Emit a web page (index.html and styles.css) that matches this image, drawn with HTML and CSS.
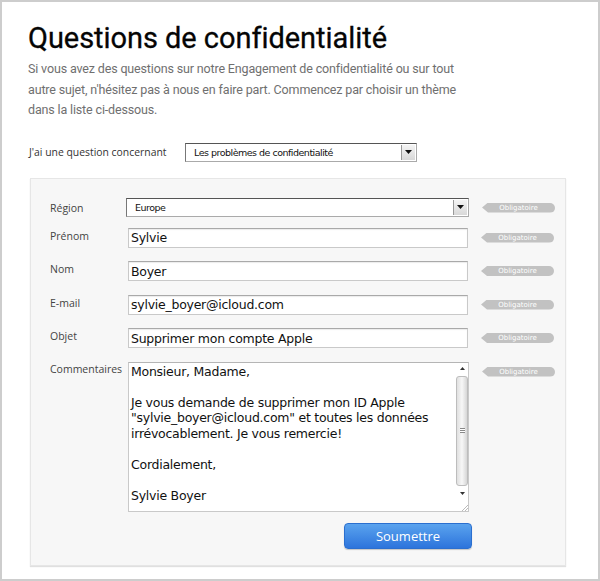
FILE: index.html
```html
<!DOCTYPE html>
<html lang="fr">
<head>
<meta charset="utf-8">
<title>Questions de confidentialité</title>
<link rel="stylesheet" href="styles.css">
</head>
<body>
<div class="frame">
  <h1 class="title">Questions de confidentialité</h1>
  <p class="intro">Si vous avez des questions sur notre Engagement de confidentialité ou sur tout<br>autre sujet, n'hésitez pas à nous en faire part. Commencez par choisir un thème<br>dans la liste ci-dessous.</p>

  <div class="topic">
    <span class="topic-label">J'ai une question concernant</span>
    <div class="select topic-select">
      <span class="select-text">Les problèmes de confidentialité</span>
      <span class="select-btn"><svg width="7" height="4" viewBox="0 0 7 4"><path d="M0 0H7L3.5 4Z" fill="#111"/></svg></span>
    </div>
  </div>

  <div class="panel">
    <div class="row row-region">
      <span class="label">Région</span>
      <div class="select region-select">
        <span class="select-text">Europe</span>
        <span class="select-btn"><svg width="7" height="4" viewBox="0 0 7 4"><path d="M0 0H7L3.5 4Z" fill="#111"/></svg></span>
      </div>
      <span class="badge">Obligatoire</span>
    </div>
    <div class="row">
      <span class="label">Prénom</span>
      <input class="field" type="text" value="Sylvie">
      <span class="badge">Obligatoire</span>
    </div>
    <div class="row">
      <span class="label">Nom</span>
      <input class="field" type="text" value="Boyer">
      <span class="badge">Obligatoire</span>
    </div>
    <div class="row">
      <span class="label">E-mail</span>
      <input class="field" type="text" value="sylvie_boyer@icloud.com">
      <span class="badge">Obligatoire</span>
    </div>
    <div class="row">
      <span class="label">Objet</span>
      <input class="field" type="text" value="Supprimer mon compte Apple">
      <span class="badge">Obligatoire</span>
    </div>
    <div class="row">
      <span class="label label-top">Commentaires</span>
      <div class="textarea">
        <div class="ta-text">Monsieur, Madame,<br><br>Je vous demande de supprimer mon ID Apple<br>"sylvie_boyer@icloud.com" et toutes les données<br>irrévocablement. Je vous remercie!<br><br>Cordialement,<br><br>Sylvie Boyer</div>
        <div class="scrollbar">
          <span class="sb-arrow"><svg width="5" height="3" viewBox="0 0 5 3"><path d="M0 3H5L2.5 0Z" fill="#333"/></svg></span>
          <div class="sb-track"><div class="sb-thumb"><span class="grip"></span></div></div>
          <span class="sb-arrow"><svg width="5" height="3" viewBox="0 0 5 3"><path d="M0 0H5L2.5 3Z" fill="#333"/></svg></span>
          <span class="sb-corner"><svg width="7" height="7" viewBox="0 0 7 7"><path d="M7 1L1 7M7 4L4 7" stroke="#bbb" stroke-width="1"/></svg></span>
        </div>
      </div>
      <span class="badge badge-top">Obligatoire</span>
    </div>
    <div class="actions">
      <button class="submit" type="button">Soumettre</button>
    </div>
  </div>
</div>
</body>
</html>
```

FILE: styles.css
```css
* { box-sizing: border-box; }
html, body { margin: 0; padding: 0; background: #fff; }
.frame {
  width: 600px;
  height: 581px;
  border: 2px solid #cdcdcd;
  padding: 0 32px 0 26px;
  font-family: "Open Sans", "DejaVu Sans", sans-serif;
}
.title {
  margin: 0;
  padding-top: 17px;
  font-family: Roboto, "Open Sans", sans-serif;
  font-weight: 400;
  font-size: 29px;
  line-height: 38px;
  color: #050505;
  letter-spacing: -0.05px;
  -webkit-text-stroke: 0.3px #050505;
}
.intro {
  margin: 2px 0 0;
  font-family: Roboto, "Open Sans", sans-serif;
  font-size: 12.5px;
  letter-spacing: -0.15px;
  line-height: 20.5px;
  color: #6f6f6f;
  white-space: nowrap;
}
.topic {
  display: flex;
  align-items: center;
  margin-top: 22px;
  padding-left: 1px;
  height: 19px;
}
.topic-label {
  font-size: 10.4px;
  color: #333;
  width: 156px;
}
.select {
  display: flex;
  align-items: stretch;
  background: #fff;
  border: 1px solid #aaa;
  border-top-color: #555;
  border-left-color: #777;
  height: 19px;
}
.topic-select { width: 232px; }
.select-text {
  flex: 1;
  font-size: 9.5px;
  line-height: 17px;
  padding-left: 8px;
  color: #111;
  font-family: "DejaVu Sans", sans-serif;
  letter-spacing: -0.5px;
}
.select-btn {
  width: 14px;
  display: flex;
  align-items: center;
  justify-content: center;
  background: linear-gradient(#f4f4f4, #d8d8d8);
  border-left: 1px solid #999;
  margin: 1px;
}
.panel {
  margin: 16px 0 0 2px;
  background: #f7f7f7;
  border: 1px solid #e6e6e6;
  box-shadow: 0 1px 1px rgba(0,0,0,0.12);
  padding: 19px 10px 16px 19px;
  height: 388px;
}
.row {
  display: flex;
  align-items: flex-start;
  margin-bottom: 13.5px;
}
.row-region { margin-bottom: 11px; }
.label {
  width: 76px;
  font-size: 10.5px;
  color: #444;
  line-height: 14px;
  padding-top: 1px;
  flex: none;
}
.row-region .label { padding-top: 3px; }
.label-top { padding-top: 0; }
.region-select { width: 344px; height: 19px; }
.region-select .select-text { padding-left: 8px; }
.field {
  width: 340px;
  height: 20px;
  margin-left: 2px;
  border: 1px solid #c9c9c9;
  border-top-color: #a9a9a9;
  box-shadow: inset 0 1px 1px rgba(0,0,0,0.08);
  padding: 0 0 0 2px;
  font-family: "DejaVu Sans", sans-serif;
  font-size: 12.5px;
  letter-spacing: -0.25px;
  color: #111;
  background: #fff;
  outline: none;
}
.badge {
  margin-left: 13px;
  margin-top: 5px;
  width: 73px;
  height: 10px;
  background: #c2c2c2;
  color: #fff;
  font-family: "DejaVu Sans", sans-serif;
  font-size: 7px;
  line-height: 10px;
  text-align: center;
  border-radius: 0 5px 5px 0;
  clip-path: polygon(0 50%, 6px 0, 100% 0, 100% 100%, 6px 100%);
  flex: none;
}
.textarea {
  display: flex;
  width: 342px;
  height: 150px;
  margin-left: 2px;
  background: #fff;
  border: 1px solid #c9c9c9;
  border-top-color: #b5b5b5;
}
.ta-text {
  flex: 1;
  padding: 1px 0 0 2px;
  font-family: "DejaVu Sans", sans-serif;
  font-size: 12.5px;
  letter-spacing: -0.25px;
  line-height: 15.5px;
  color: #111;
}
.scrollbar {
  width: 12px;
  display: flex;
  flex-direction: column;
  background: #fff;
}
.sb-arrow {
  height: 11px;
  display: flex;
  align-items: center;
  justify-content: center;
}
.sb-track {
  flex: 1;
  padding: 2px 0 2px 0;
  display: flex;
}
.sb-thumb {
  flex: 1;
  border: 1px solid #bdbdbd;
  border-radius: 3px;
  background: linear-gradient(90deg, #e0e0e0, #f7f7f7 50%, #d6d6d6);
  display: flex;
  align-items: center;
  justify-content: center;
}
.grip {
  width: 5px;
  height: 5px;
  border-top: 1px solid #888;
  border-bottom: 1px solid #888;
  background: linear-gradient(#fff 40%, #888 40%, #888 60%, #fff 60%);
}
.sb-corner {
  height: 12px;
  display: flex;
  align-items: flex-end;
  justify-content: flex-end;
}
.actions {
  display: flex;
  justify-content: flex-end;
  width: 422px;
  margin-top: -2.5px;
}
.submit {
  width: 128px;
  height: 26px;
  border: 1px solid #2b6fcf;
  border-radius: 4px;
  background: linear-gradient(#5aa3ee, #2d74dc);
  color: #fff;
  font-family: "Open Sans", sans-serif;
  font-size: 13px;
  padding: 0;
  box-shadow: 0 1px 1px rgba(0,0,0,0.2);
}
```
